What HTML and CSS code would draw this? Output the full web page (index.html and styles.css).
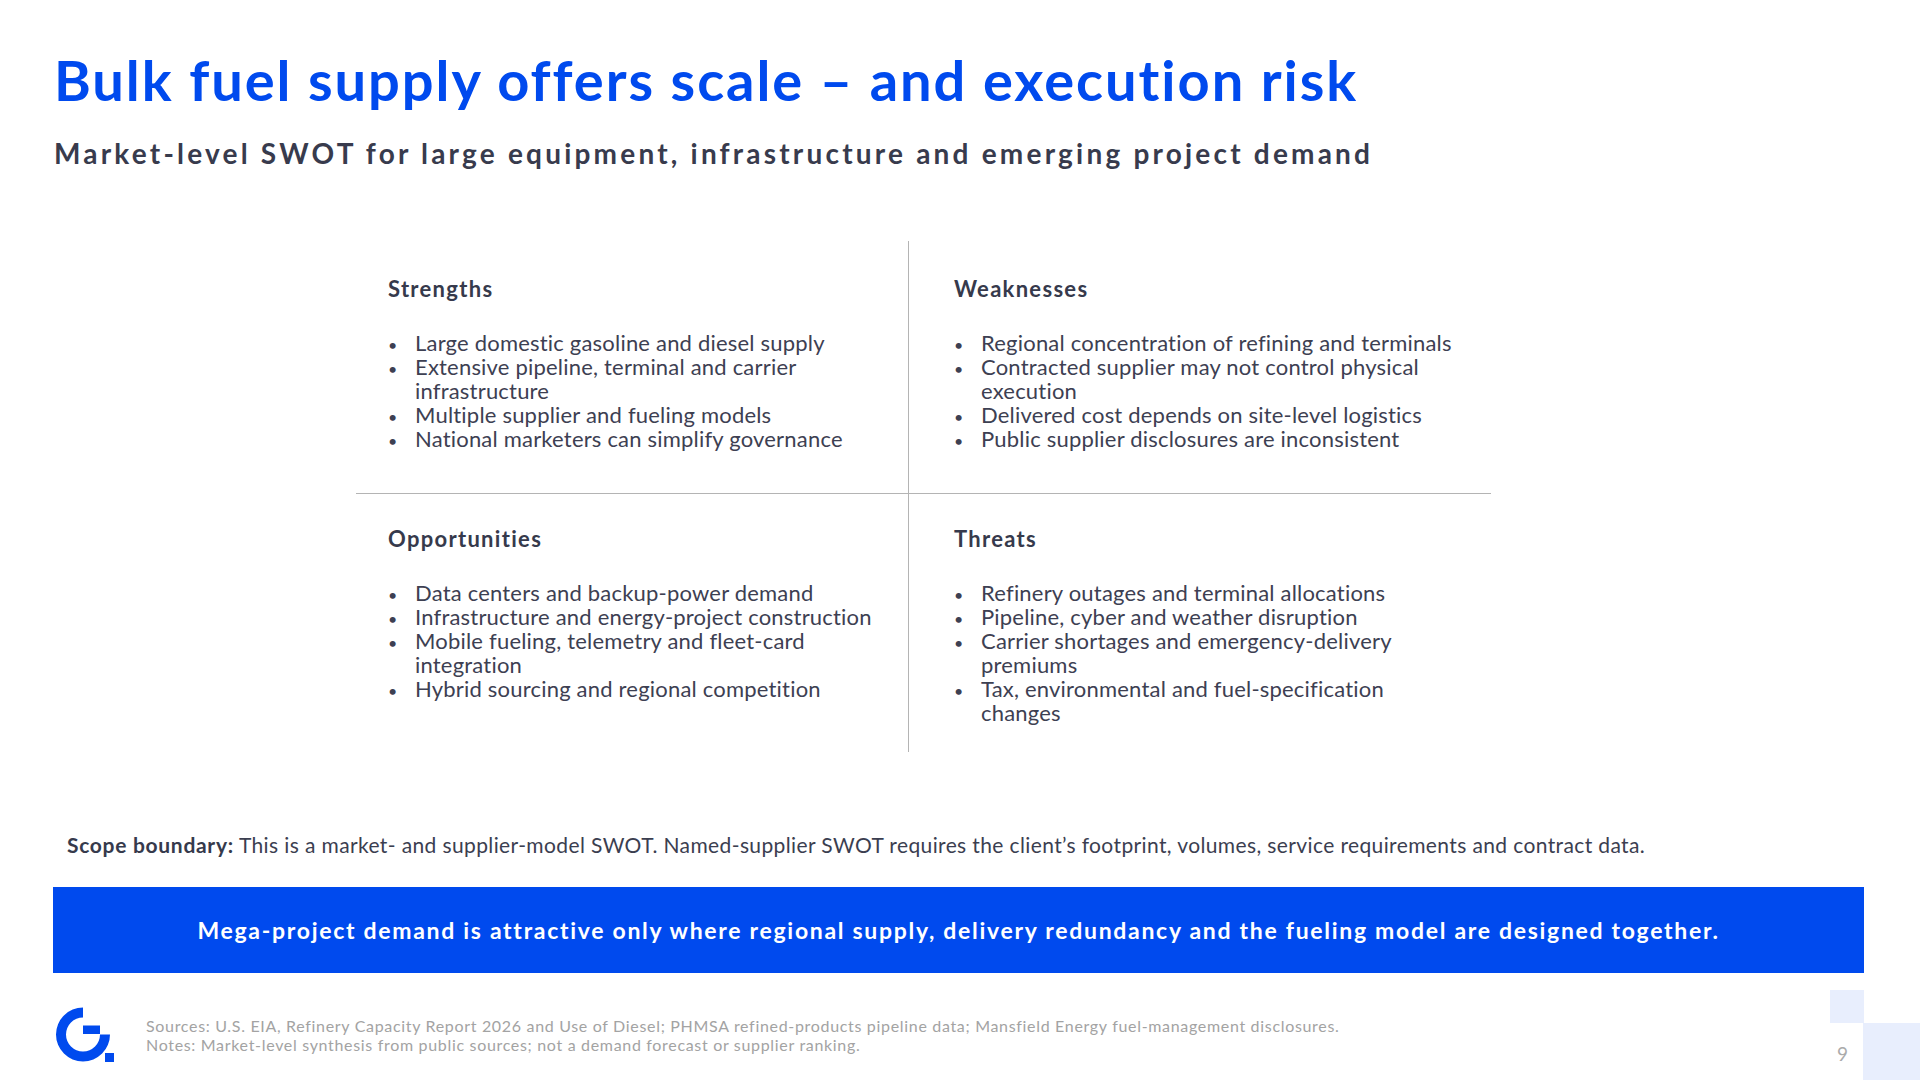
FILE: index.html
```html
<!DOCTYPE html>
<html lang="en">
<head>
<meta charset="utf-8">
<title>Bulk fuel supply SWOT</title>
<link rel="stylesheet" href="styles.css">
</head>
<body>
<div class="slide">
  <header class="head">
    <h1 class="title">Bulk fuel supply offers scale – and execution risk</h1>
    <p class="subtitle">Market-level SWOT for large equipment, infrastructure and emerging project demand</p>
  </header>

  <section class="swot">
    <div class="cell cell-top cell-left">
      <h2 class="cell-title">Strengths</h2>
      <ul class="items">
        <li>Large domestic gasoline and diesel supply</li>
        <li>Extensive pipeline, terminal and carrier infrastructure</li>
        <li>Multiple supplier and fueling models</li>
        <li>National marketers can simplify governance</li>
      </ul>
    </div>
    <div class="cell cell-top cell-right">
      <h2 class="cell-title">Weaknesses</h2>
      <ul class="items">
        <li>Regional concentration of refining and terminals</li>
        <li>Contracted supplier may not control physical execution</li>
        <li>Delivered cost depends on site-level logistics</li>
        <li>Public supplier disclosures are inconsistent</li>
      </ul>
    </div>
    <div class="cell cell-bottom cell-left">
      <h2 class="cell-title">Opportunities</h2>
      <ul class="items">
        <li>Data centers and backup-power demand</li>
        <li>Infrastructure and energy-project construction</li>
        <li>Mobile fueling, telemetry and fleet-card integration</li>
        <li>Hybrid sourcing and regional competition</li>
      </ul>
    </div>
    <div class="cell cell-bottom cell-right">
      <h2 class="cell-title">Threats</h2>
      <ul class="items">
        <li>Refinery outages and terminal allocations</li>
        <li>Pipeline, cyber and weather disruption</li>
        <li>Carrier shortages and emergency-delivery premiums</li>
        <li>Tax, environmental and fuel-specification changes</li>
      </ul>
    </div>
  </section>

  <p class="scope"><strong>Scope boundary:</strong> This is a market- and supplier-model SWOT. Named-supplier SWOT requires the client’s footprint, volumes, service requirements and contract data.</p>

  <div class="band">Mega-project demand is attractive only where regional supply, delivery redundancy and the fueling model are designed together.</div>

  <footer class="foot">
    <svg class="logo" viewBox="0 0 61 57" width="61" height="57" aria-label="logo">
      <path d="M29 1.5 A27 27 0 1 0 56 28.5 L46 28.5 A17 17 0 1 1 29 11.5 Z" fill="#004aee"/>
      <rect x="29" y="19.5" width="17" height="8.5" fill="#004aee"/>
      <rect x="51" y="47" width="9" height="9" fill="#004aee"/>
    </svg>
    <div class="notes">
      <p>Sources: U.S. EIA, Refinery Capacity Report 2026 and Use of Diesel; PHMSA refined-products pipeline data; Mansfield Energy fuel-management disclosures.</p>
      <p>Notes: Market-level synthesis from public sources; not a demand forecast or supplier ranking.</p>
    </div>
  </footer>

  <div class="deco deco-a"></div>
  <div class="deco deco-b"></div>
  <span class="pageno">9</span>
</div>
</body>
</html>
```
FILE: styles.css
```css
* { box-sizing: border-box; }
html, body { margin: 0; padding: 0; background: #ffffff; }
.slide {
  position: relative;
  width: 1920px;
  height: 1080px;
  overflow: hidden;
  font-family: Lato, "Liberation Sans", sans-serif;
  color: #3b3e50;
}
.head { padding: 48px 0 0 54px; }
.title {
  margin: 0;
  font-size: 56px;
  line-height: 64px;
  font-weight: 700;
  letter-spacing: 1.95px;
  color: #004aee;
}
.subtitle {
  margin: 24px 0 0;
  font-size: 28px;
  line-height: 34px;
  font-weight: 700;
  letter-spacing: 3.2px;
  color: #383b4d;
}
.swot {
  margin: 71px 0 0 356px;
  width: 1135px;
  display: grid;
  grid-template-columns: 553px 582px;
  grid-template-rows: 253px 258px;
}
.cell-left { border-right: 1px solid #b4b4b4; padding-left: 32px; padding-right: 30px; }
.cell-right { padding-left: 45px; padding-right: 30px; }
.cell-top { border-bottom: 1px solid #b4b4b4; padding-top: 34px; }
.cell-bottom { padding-top: 31px; }
.cell-title {
  margin: 0;
  font-size: 22px;
  line-height: 28px;
  font-weight: 700;
  letter-spacing: 1.3px;
  color: #363a4c;
}
.items {
  list-style: none;
  margin: 28px 0 0;
  padding: 0;
  font-size: 22px;
  line-height: 24px;
  letter-spacing: 0.2px;
  color: #3d4052;
}
.items li { padding-left: 27px; text-indent: -27px; }
.items li::before {
  content: "•";
  display: inline-block;
  width: 27px;
  font-size: 16px;
  line-height: 1;
  text-indent: 0;
}
.scope {
  margin: 80px 0 0 67px;
  font-size: 21px;
  line-height: 26px;
  letter-spacing: 0.38px;
  color: #3b3e50;
}
.scope strong { font-weight: 700; letter-spacing: 0.7px; color: #363a4c; }
.band {
  margin: 29px 0 0 53px;
  width: 1811px;
  height: 86px;
  background: #004aee;
  color: #ffffff;
  font-size: 23px;
  font-weight: 700;
  letter-spacing: 1.7px;
  display: flex;
  align-items: center;
  justify-content: center;
}
.foot {
  margin: 33px 0 0 54px;
  display: flex;
  align-items: center;
  gap: 31px;
}
.logo { display: block; flex: none; }
.notes p {
  margin: 0;
  font-size: 16px;
  line-height: 19px;
  letter-spacing: 0.68px;
  color: #a3a3a3;
}
.deco { position: absolute; background: #e8eefd; }
.deco-a { left: 1830px; top: 990px; width: 34px; height: 33px; }
.deco-b { left: 1863px; top: 1023px; width: 57px; height: 57px; }
.pageno {
  position: absolute;
  left: 1837px;
  top: 1042px;
  font-size: 19px;
  line-height: 24px;
  color: #ababab;
}
```
